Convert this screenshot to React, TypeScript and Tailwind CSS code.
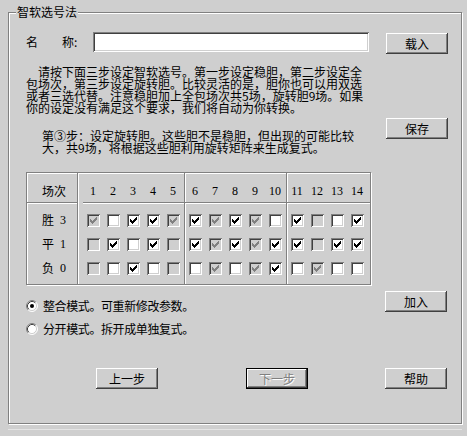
import clsx from 'clsx'

type Box = 'x' | 'o' | 'X' | 'O'

const rows: { label: string; num: string; marks: string[] }[] = [
  { label: '胜', num: '3', marks: ['XoxxX', 'xXxXo', 'xOox'] },
  { label: '平', num: '1', marks: ['OxoxO', 'xXxXx', 'xOxx'] },
  { label: '负', num: '0', marks: ['OoxoO', 'oXoXx', 'oXoo'] },
]

const groups = [
  { nums: [1, 2, 3, 4, 5], cls: 'w-[107px] pl-[5px]' },
  { nums: [6, 7, 8, 9, 10], cls: 'w-[102px] pl-0' },
  { nums: [11, 12, 13, 14], cls: 'w-[84px] pl-0' },
]

const CHECK =
  'M6 0h1v1h-1z M5 1h2v1h-2z M0 2h1v1h-1z M4 2h3v1h-3z M0 3h2v1h-2z M3 3h3v1h-3z M0 4h5v1h-5z M1 5h3v1h-3z M2 6h1v1h-1z'

function CheckBox({ state }: { state: Box }) {
  const gray = state === 'X' || state === 'O'
  const checked = state === 'x' || state === 'X'
  return (
    <div
      className={clsx(
        'w-[13px] h-[13px] flex items-center justify-center shadow-[inset_1px_1px_0_#808080,inset_-1px_-1px_0_#fff,inset_2px_2px_0_#404040,inset_-2px_-2px_0_#cfcfcf]',
        gray ? 'bg-[#cfcfcf]' : 'bg-white'
      )}
    >
      {checked && (
        <svg width="7" height="7" viewBox="0 0 7 7" shapeRendering="crispEdges">
          <path d={CHECK} fill={gray ? '#808080' : '#000'} />
        </svg>
      )}
    </div>
  )
}

function Radio({ on }: { on: boolean }) {
  return (
    <svg width="12" height="12" viewBox="0 0 12 12">
      <circle cx="6" cy="6" r="5" fill="#fff" />
      <path d="M2.11 9.89 A5.5 5.5 0 0 1 9.89 2.11" fill="none" stroke="#808080" />
      <path d="M9.89 2.11 A5.5 5.5 0 0 1 2.11 9.89" fill="none" stroke="#fff" />
      <path d="M2.82 9.18 A4.5 4.5 0 0 1 9.18 2.82" fill="none" stroke="#404040" />
      <path d="M9.18 2.82 A4.5 4.5 0 0 1 2.82 9.18" fill="none" stroke="#cfcfcf" />
      {on && <circle cx="6" cy="6" r="2" fill="#000" />}
    </svg>
  )
}

function Btn({ children, disabled, primary }: { children: string; disabled?: boolean; primary?: boolean }) {
  return (
    <button
      className={clsx(
        'w-[62px] h-[21px] flex items-center justify-center text-[12px] leading-[12px] bg-[#cfcfcf]',
        primary
          ? 'shadow-[inset_0_0_0_1px_#000,inset_-2px_-2px_0_#404040,inset_2px_2px_0_#fff,inset_-3px_-3px_0_#808080]'
          : 'shadow-[inset_-1px_-1px_0_#404040,inset_1px_1px_0_#fff,inset_-2px_-2px_0_#808080]',
        disabled ? 'text-[#808080] [text-shadow:1px_1px_0_#fff]' : 'text-black'
      )}
    >
      {children}
    </button>
  )
}

export default function App() {
  return (
    <div className="w-[467px] h-[436px] overflow-hidden bg-[#cfcfcf] text-black text-[12px] font-['Noto_Sans_CJK_SC','Noto_Sans',sans-serif] pt-[12px]">
      <div className="relative ml-[8px] w-[454px] h-[412px] border border-[#808080] shadow-[inset_1px_1px_0_#fff,1px_1px_0_#fff]">
        <div className="absolute left-[7px] top-[-7px] bg-[#cfcfcf] px-px leading-[12px]">智软选号法</div>

        <div className="flex flex-col pl-[17px] pt-[19px]">
          {/* name row */}
          <div className="flex items-start">
            <div className="w-[67px] leading-[20px] whitespace-pre">名　　称:</div>
            <input className="w-[276px] h-[20px] bg-white outline-none px-[3px] shadow-[inset_1px_1px_0_#808080,inset_-1px_-1px_0_#fff,inset_2px_2px_0_#404040,inset_-2px_-2px_0_#cfcfcf]" />
            <div className="ml-[17px] mt-[1px]">
              <Btn>载入</Btn>
            </div>
          </div>

          {/* description */}
          <div className="flex mt-[12px]">
            <div className="w-[360px] leading-[12px] whitespace-nowrap">
              <div className="pl-[12px]">请按下面三步设定智软选号。第一步设定稳胆，第二步设定全</div>
              <div>包场次，第三步设定旋转胆。比较灵活的是，胆你也可以用双选</div>
              <div>或者三选代替。注意稳胆加上全包场次共5场，旋转胆9场。如果</div>
              <div>你的设定没有满足这个要求，我们将自动为你转换。</div>
              <div className="mt-[16px] pl-[16px]">
                <div>第③步：设定旋转胆。这些胆不是稳胆，但出现的可能比较</div>
                <div>大，共9场，将根据这些胆利用旋转矩阵来生成复式。</div>
              </div>
            </div>
            <div className="mt-[52px]">
              <Btn>保存</Btn>
            </div>
          </div>

          {/* matrix */}
          <div className="mt-[18px] flex w-[345px] h-[113px] border border-[#808080] shadow-[inset_1px_1px_0_#fff,1px_1px_0_#fff]">
            <div className="w-[50px] flex flex-col">
              <div className="h-[30px] border-b border-[#808080] shadow-[0_1px_0_#fff] pl-[15px] pt-[12px] leading-[12px]">场次</div>
              <div className="pt-[5px]">
                {rows.map((r) => (
                  <div key={r.label} className="h-[24px] flex items-center pl-[15px]">
                    <span>{r.label}</span>
                    <span className="ml-[6px] font-['Liberation_Serif',serif]">{r.num}</span>
                  </div>
                ))}
              </div>
            </div>
            {groups.map((g, gi) => (
              <div key={gi} className={clsx('flex flex-col border-l border-[#808080] shadow-[inset_1px_0_0_#fff]', g.cls)}>
                <div className="h-[30px] border-b border-[#808080] shadow-[0_1px_0_#fff] flex pt-[12px] leading-[12px] font-['Liberation_Serif',serif]">
                  {g.nums.map((n) => (
                    <div key={n} className="w-[20px] text-center">
                      {n}
                    </div>
                  ))}
                </div>
                <div className="pt-[5px]">
                  {rows.map((r) => (
                    <div key={r.label} className="h-[24px] flex items-center">
                      {r.marks[gi].split('').map((m, i) => (
                        <div key={i} className="w-[20px] flex justify-center">
                          <CheckBox state={m as Box} />
                        </div>
                      ))}
                    </div>
                  ))}
                </div>
              </div>
            ))}
          </div>

          {/* mode */}
          <div className="flex mt-[6px]">
            <div className="w-[359px] pt-[7px] flex flex-col gap-[7px]">
              <div className="h-[16px] flex items-center gap-[5px] tracking-[-0.4px]">
                <Radio on />
                <span>整合模式。可重新修改参数。</span>
              </div>
              <div className="h-[16px] flex items-center gap-[5px] tracking-[-0.4px]">
                <Radio on={false} />
                <span>分开模式。拆开成单独复式。</span>
              </div>
            </div>
            <div>
              <Btn>加入</Btn>
            </div>
          </div>

          {/* steps */}
          <div className="flex mt-[31px]">
            <div className="ml-[70px]">
              <Btn>上一步</Btn>
            </div>
            <div className="ml-[88px]">
              <Btn disabled primary>下一步</Btn>
            </div>
            <div className="ml-[77px]">
              <Btn>帮助</Btn>
            </div>
          </div>
        </div>
      </div>
      <div className="mt-[5px] ml-[8px] w-[454px] h-px bg-[#e4e4e4]" />
    </div>
  )
}
